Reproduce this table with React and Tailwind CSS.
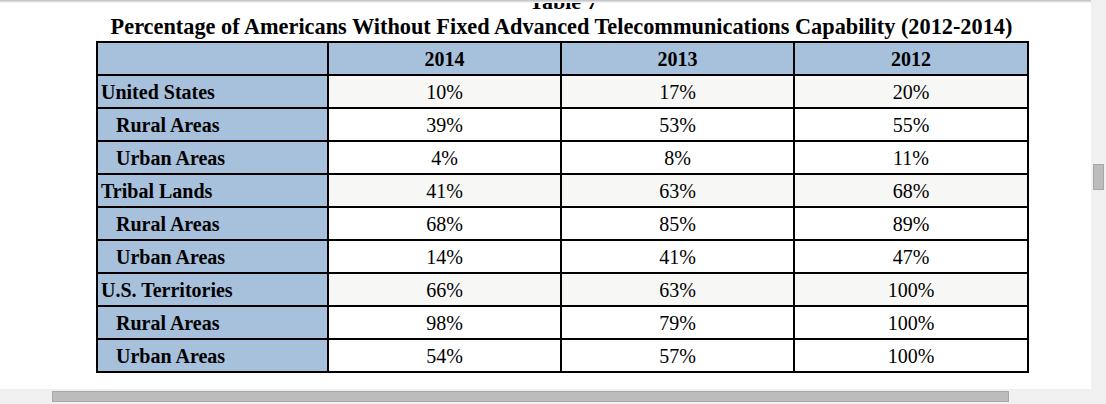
import React from "react";

const rows = [
  { label: "United States", sub: false, v: ["10%", "17%", "20%"] },
  { label: "Rural Areas", sub: true, v: ["39%", "53%", "55%"] },
  { label: "Urban Areas", sub: true, v: ["4%", "8%", "11%"] },
  { label: "Tribal Lands", sub: false, v: ["41%", "63%", "68%"] },
  { label: "Rural Areas", sub: true, v: ["68%", "85%", "89%"] },
  { label: "Urban Areas", sub: true, v: ["14%", "41%", "47%"] },
  { label: "U.S. Territories", sub: false, v: ["66%", "63%", "100%"] },
  { label: "Rural Areas", sub: true, v: ["98%", "79%", "100%"] },
  { label: "Urban Areas", sub: true, v: ["54%", "57%", "100%"] },
];

export default function App() {
  return (
    <div
      className="grid grid-cols-[1091px_15px] grid-rows-[389px_15px] w-[1106px] h-[404px] bg-[#f0f0f0] overflow-hidden text-black"
      style={{ fontFamily: '"Liberation Serif", "Times New Roman", serif' }}
    >
      <div className="relative bg-white overflow-hidden">
        <div className="absolute top-0 left-0 right-0 h-[3px] bg-gradient-to-b from-[#bdbdbd] to-white z-10" />
        <div className="flex flex-col items-center mt-[-9px] ml-[96px] w-[931px] whitespace-nowrap">
          <div className="text-[22px] font-bold leading-[22px] pl-[4px]">Table 7</div>
          <div className="text-[22.3px] font-bold leading-[22px] mt-[3px]">
            Percentage of Americans Without Fixed Advanced Telecommunications Capability (2012-2014)
          </div>
        </div>
        <table className="ml-[96px] mt-[3px] w-[931px] border-collapse border-2 border-black table-fixed">
          <colgroup>
            <col className="w-[231px]" />
            <col className="w-[233px]" />
            <col className="w-[233px]" />
            <col className="w-[234px]" />
          </colgroup>
          <thead>
            <tr className="h-[33px] bg-[#a7c0dc]">
              <th className="border-2 border-black p-0" />
              {["2014", "2013", "2012"].map((y) => (
                <th key={y} className="border-2 border-black p-0 text-[20px] leading-[22px] font-bold text-center">
                  {y}
                </th>
              ))}
            </tr>
          </thead>
          <tbody>
            {rows.map((r, i) => (
              <tr key={i} className="h-[33px]">
                <td
                  className={`border-2 border-black p-0 bg-[#a7c0dc] text-[20px] leading-[22px] font-bold whitespace-nowrap ${
                    r.sub ? "pl-[18px]" : "pl-[3px]"
                  }`}
                >
                  {r.label}
                </td>
                {r.v.map((v, j) => (
                  <td
                    key={j}
                    className={`border-2 border-black p-0 text-[20px] leading-[22px] text-center ${
                      r.sub ? "bg-white" : "bg-[#f7f7f5]"
                    }`}
                  >
                    {v}
                  </td>
                ))}
              </tr>
            ))}
          </tbody>
        </table>
      </div>
      <div className="flex flex-col items-center pt-[164px]">
        <div className="w-[11px] h-[26px] bg-[#bcbcbc] border border-[#a8a8a8]" />
      </div>
      <div className="pl-[52px] pt-[2px]">
        <div className="w-[957px] h-[11px] bg-[#bcbcbc] border border-[#a8a8a8]" />
      </div>
      <div />
    </div>
  );
}
